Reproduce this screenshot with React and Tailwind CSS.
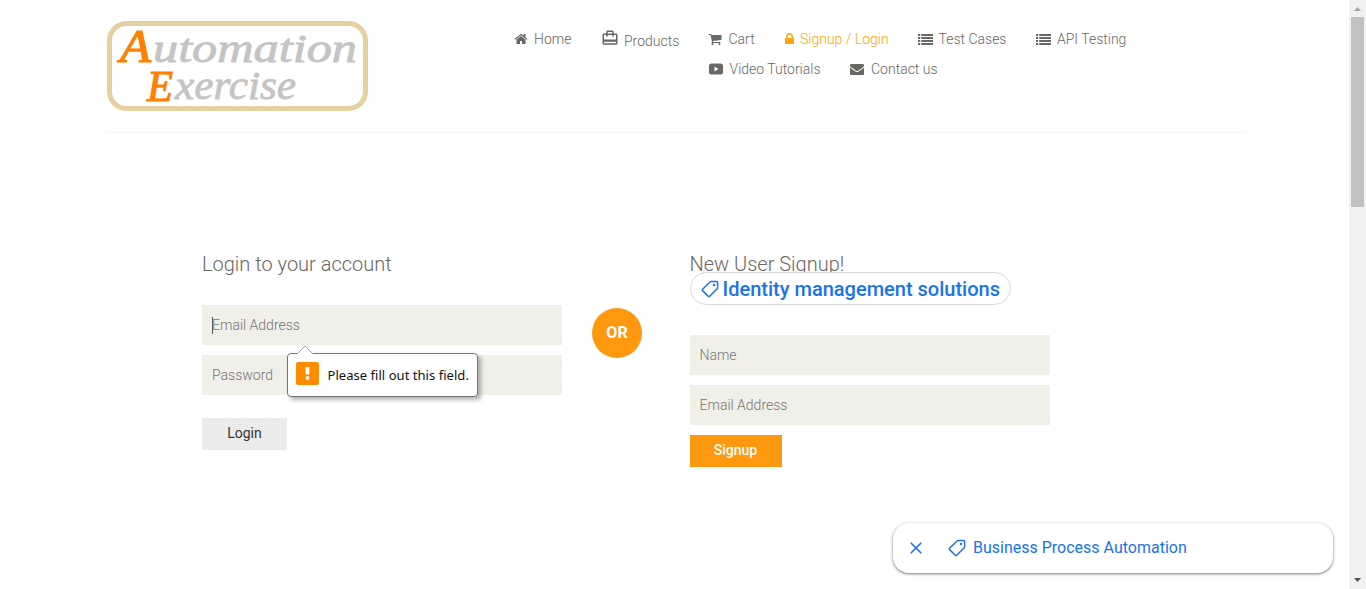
import React from "react";

const faPaths = {
  home: "M1472 992v480q0 26-19 45t-45 19h-384v-384h-256v384h-384q-26 0-45-19t-19-45v-480q0-1 .5-3t.5-3l575-474 575 474q1 2 1 6zm223-69l-62 74q-8 9-21 11h-3q-13 0-21-7l-692-577-692 577q-12 8-24 7-13-2-21-11l-62-74q-8-10-7-23.5t11-21.5l719-599q32-26 76-26t76 26l244 204v-195q0-14 9-23t23-9h192q14 0 23 9t9 23v408l219 182q10 8 11 21.5t-7 23.5z",
  cart: "M704 1536q0 52-38 90t-90 38-90-38-38-90 38-90 90-38 90 38 38 90zm896 0q0 52-38 90t-90 38-90-38-38-90 38-90 90-38 90 38 38 90zm128-1088v512q0 24-16.5 42.5t-40.5 21.5l-1044 122q13 60 13 70 0 16-24 64h920q26 0 45 19t19 45-19 45-45 19h-1024q-26 0-45-19t-19-45q0-11 8-31.5t16-36 21.5-40 15.5-29.5l-177-823h-204q-26 0-45-19t-19-45 19-45 45-19h256q16 0 28.5 6.5t19.5 15.5 13 24.5 8 26 5.5 29.5 4.5 26h1201q26 0 45 19t19 45z",
  lock: "M640 768h512v-192q0-106-75-181t-181-75-181 75-75 181v192zm832 96v576q0 40-28 68t-68 28h-960q-40 0-68-28t-28-68v-576q0-40 28-68t68-28h32v-192q0-184 132-316t316-132 316 132 132 316v192h32q40 0 68 28t28 68z",
  list: "M0 256h256v256H0zM384 256h1408v256H384zM0 640h256v256H0zM384 640h1408v256H384zM0 1024h256v256H0zM384 1024h1408v256H384zM0 1408h256v256H0zM384 1408h1408v256H384z",
  video: "M320 192h1152q320 0 320 320v768q0 320-320 320H320Q0 1600 0 1280V512Q0 192 320 192zM704 576v640l512-320z",
  mail: "M1792 710v794q0 66-47 113t-113 47h-1472q-66 0-113-47t-47-113v-794q44 49 101 87 362 246 497 345 57 42 92.5 65.5t94.5 48 110 24.5h2q51 0 110-24.5t94.5-48 92.5-65.5q170-123 498-345 57-39 100-87zm0-294q0 79-49 151t-122 123q-376 261-468 325-10 7-42.5 31t-54 38.5-52 32.5-57.5 27-50 9h-2q-23 0-50-9t-57.5-27-52-32.5-54-38.5-42.5-31q-91-64-262-182.5t-205-142.5q-62-42-117-115.5t-55-136.5q0-78 41.5-130t118.5-52h1472q65 0 112.5 47t47.5 113z",
};

function Fa({ name, box = "0 0 1792 1792", className = "w-3.5" }) {
  return (
    <svg viewBox={box} preserveAspectRatio="none" className={`h-3.5 shrink-0 fill-current ${className}`}>
      <path fillRule="evenodd" d={faPaths[name]} />
    </svg>
  );
}

function NavItem({ icon, box, iconClass, label, className }) {
  return (
    <a className={`flex h-5 shrink-0 items-center whitespace-nowrap ${className}`}>
      <Fa name={icon} box={box} className={iconClass} />
      <span>{label}</span>
    </a>
  );
}

function Tag({ className }) {
  return (
    <svg viewBox="0 0 18 18" className={className} fill="none" stroke="currentColor" strokeWidth="1.5" strokeLinejoin="round">
      <path d="M10.2 1.4h5.3q1.1 0 1.1 1.1v5.2q0 .6-.4 1L8.7 16.2q-.7.7-1.4 0L1.6 10.6q-.7-.7 0-1.4L9.3 1.8q.4-.4.9-.4z" />
      <circle cx="13" cy="5" r="1.2" fill="currentColor" stroke="none" />
    </svg>
  );
}

function Logo() {
  return (
    <svg viewBox="0 0 261 90" className="h-[90px] w-[261px] shrink-0 font-['Liberation_Serif',serif] italic">
      <rect x="2.5" y="2.5" width="256" height="85" rx="17" fill="none" stroke="#e6d0a0" strokeWidth="5" />
      <g fill="#ff8000" stroke="#ff8000" strokeWidth="1.2">
        <text x="13" y="41" fontSize="46" textLength="31" lengthAdjust="spacingAndGlyphs">A</text>
        <text x="40" y="80" fontSize="45" textLength="26" lengthAdjust="spacingAndGlyphs">E</text>
      </g>
      <g fill="#c4c4c4" stroke="#c4c4c4" strokeWidth="0.8">
        <text x="46" y="41" fontSize="39" textLength="204" lengthAdjust="spacingAndGlyphs">utomation</text>
        <text x="68" y="78" fontSize="39" textLength="121" lengthAdjust="spacingAndGlyphs">xercise</text>
      </g>
    </svg>
  );
}

function Field({ label, className = "", caret = false }) {
  return (
    <div className={`flex h-10 w-[360px] items-center bg-[#f0f0e9] text-sm font-light text-[#757575] ${className}`}>
      {caret && <span className="-mr-px h-[17px] w-px bg-[#555]" />}
      <span>{label}</span>
    </div>
  );
}

export default function App() {
  return (
    <div className="relative flex h-[589px] w-[1366px] overflow-hidden bg-white font-[Roboto,sans-serif] text-sm font-light text-[#696763]">
      <div className="flex min-w-0 flex-1 flex-col">
        <header className="ml-[105px] flex h-[133px] w-[1140px] border-b border-[#f5f5f5] pl-[2px] pt-[21px]">
          <Logo />
          <nav className="ml-[146px] flex pt-2">
            <NavItem icon="home" iconClass="w-3.5 mr-1.5" label="Home" className="w-[87px]" />
            <a className="flex h-6 w-[108px] shrink-0">
              <svg viewBox="0 0 24 24" className="mr-[5px] size-[18px] shrink-0 fill-current">
                <path d="M20 6h-3V4c0-1.11-.89-2-2-2H9c-1.11 0-2 .89-2 2v2H4c-1.11 0-2 .89-2 2v11c0 1.11.89 2 2 2h16c1.11 0 2-.89 2-2V8c0-1.11-.89-2-2-2zM9 4h6v2H9V4zm11 15H4v-2h16v2zm0-5H4V8h3v2h2V8h6v2h2V8h3v6z" />
              </svg>
              <span className="mt-0.5">Products</span>
            </a>
            <div className="flex flex-col gap-[10px]">
              <div className="flex">
                <NavItem icon="cart" iconClass="w-3.5 -ml-px mr-[6.5px]" label="Cart" className="w-[75px]" />
                <NavItem icon="lock" box="320 0 1152 1792" iconClass="w-[9px] ml-[0.5px] mr-[6.5px]" label="Signup / Login" className="w-[134px] text-[orange]" />
                <NavItem icon="list" iconClass="w-[15px] mr-[5.5px]" label="Test Cases" className="w-[118px]" />
                <NavItem icon="list" iconClass="w-[15px] mr-[6px]" label="API Testing" className="" />
              </div>
              <div className="flex">
                <NavItem icon="video" iconClass="w-3.5 mr-[6.5px]" label="Video Tutorials" className="w-[141px]" />
                <NavItem icon="mail" iconClass="w-3.5 mr-[7px]" label="Contact us" className="" />
              </div>
            </div>
          </nav>
        </header>

        <main className="flex pl-[202px] pt-[120px]">
          <section className="flex w-[390px] flex-col items-start">
            <h2 className="h-[52px] text-xl leading-[22px]">Login to your account</h2>
            <div className="relative">
              <Field label="Email Address" className="pl-[10px]" caret />
              <div className="absolute left-[85px] top-[48px] z-10 flex h-[44px] w-[191px] items-center rounded border border-[#767676] bg-white pl-2 shadow-[3px_3px_4px_rgba(0,0,0,0.3)]">
                <svg viewBox="0 0 18 10" className="absolute -top-[9px] left-[8px] h-[10px] w-[18px]">
                  <path d="M1 9L9 1l8 8v1H1z" fill="#fff" />
                  <path d="M1 9L9 1l8 8" fill="none" stroke="#a5a5a5" />
                </svg>
                <svg viewBox="0 0 23 23" className="mb-[3px] mr-[8.5px] size-[23px] shrink-0">
                  <rect width="23" height="23" rx="2" fill="#ff8c00" />
                  <path d="M9.5 5h4l-.3 7.5h-3.4z" fill="#fff" />
                  <circle cx="11.5" cy="16" r="1.9" fill="#fff" />
                </svg>
                <span className="whitespace-nowrap font-['Noto_Sans',sans-serif] text-[13px] font-normal tracking-[0.04px] text-[#111]">Please fill out this field.</span>
              </div>
            </div>
            <Field label="Password" className="mt-[10px] pl-[10px]" />
            <button className="mt-[23px] h-8 w-[85px] bg-[#ebebeb] pb-0.5 text-sm font-normal text-[#363432]">Login</button>
          </section>

          <div className="mt-[55px] flex size-[50px] shrink-0 items-center justify-center rounded-full bg-[#fe980f] text-base font-bold text-white">OR</div>

          <section className="ml-12 flex flex-col items-start">
            <h2 className="-ml-[0.5px] h-[19px] text-xl leading-[22px]">New User Signup!</h2>
            <div className="relative flex h-[33px] w-[321px] items-center rounded-full border border-[#d7d7d7] bg-white pl-[10px] text-xl font-medium text-[#1a73e8]">
              <Tag className="mr-[3.5px] size-[18px]" />
              <span className="whitespace-nowrap">Identity management solutions</span>
            </div>
            <Field label="Name" className="mt-[30px] pl-[9.5px]" />
            <Field label="Email Address" className="mt-[10px] pl-[9.5px]" />
            <button className="mt-[10px] h-8 w-[92px] bg-[#fe980f] pb-0.5 pr-px text-sm font-medium text-white">Signup</button>
          </section>
        </main>
      </div>

      <div className="absolute left-[893px] top-[523px] flex h-[50px] w-[440px] items-center rounded-[16px] bg-white pl-[17px] text-base font-normal text-[#1a73e8] shadow-[0_1px_3px_rgba(0,0,0,0.55)]">
        <svg viewBox="0 0 12 12" className="h-3 w-3" fill="none" stroke="currentColor" strokeWidth="1.6">
          <path d="M.7.7l10.6 10.6M11.3.7L.7 11.3" />
        </svg>
        <Tag className="ml-[26px] mr-[7px] size-[18px]" />
        <span>Business Process Automation</span>
      </div>

      <div className="flex w-[17px] shrink-0 flex-col items-center bg-[#f1f1f1]">
        <svg viewBox="0 0 17 17" className="size-[17px]"><path d="M5 11l3.5-4 3.5 4z" fill="#a3a3a3" /></svg>
        <div className="mr-px h-[190px] w-[13px] bg-[#c1c1c1]" />
        <svg viewBox="0 0 17 17" className="mt-auto size-[17px]"><path d="M5 6h7l-3.5 4z" fill="#505050" /></svg>
      </div>
    </div>
  );
}
